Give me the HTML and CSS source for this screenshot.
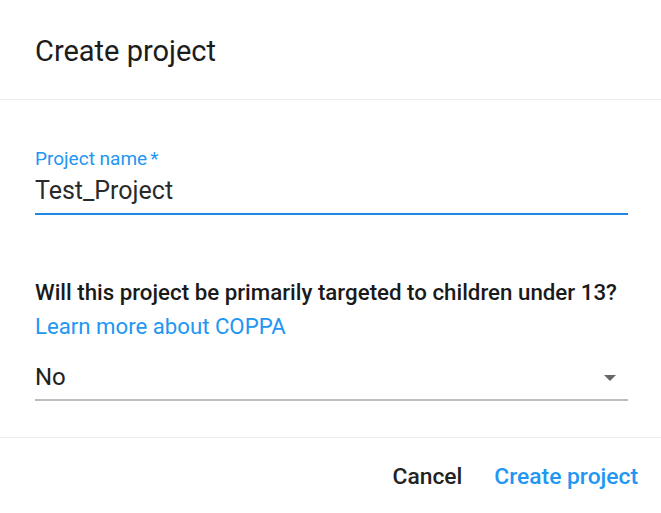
FILE: index.html
```html
<!DOCTYPE html>
<html>
<head>
<meta charset="utf-8">
<link rel="stylesheet" href="styles.css">
</head>
<body>
<div class="dialog">
  <div class="header">
    <h1 class="title">Create project</h1>
  </div>
  <div class="content">
    <div class="field focused">
      <label class="label">Project name<span class="req">*</span></label>
      <div class="value">Test_Project</div>
    </div>
    <p class="question">Will this project be primarily targeted to children under 13?</p>
    <a class="link" href="#">Learn more about COPPA</a>
    <div class="select">
      <span class="value">No</span>
      <svg class="arrow" width="12" height="6" viewBox="0 0 12 6"><path d="M0 0h12L6 6z" fill="#666"/></svg>
    </div>
  </div>
  <div class="footer">
    <button class="btn cancel">Cancel</button>
    <button class="btn primary">Create project</button>
  </div>
</div>
</body>
</html>
```

FILE: styles.css
```css
* { box-sizing: border-box; }
html, body { margin: 0; padding: 0; background: #fff; }
body { font-family: Roboto, "Noto Sans", sans-serif; color: #212121; width: 661px; height: 513px; overflow: hidden; }
.dialog { display: flex; flex-direction: column; }
.header { height: 100px; border-bottom: 1px solid #ececec; padding: 34px 35px 0; }
.title { margin: 0; font-size: 29px; line-height: 34px; font-weight: 400; color: #1c1c1c; }
.content { padding: 48px 33px 0 35px; height: 338px; border-bottom: 1px solid #ececec; display: flex; flex-direction: column; align-items: flex-start; }
.field { align-self: stretch; border-bottom: 2px solid #1e88e5; padding-bottom: 7px; }
.label { display: block; font-size: 19px; line-height: 22px; color: #2196f3; }
.req { margin-left: 3px; }
.field .value { font-size: 25px; line-height: 30px; margin-top: 6px; color: #2a2a2a; }
.question { margin: 63px 0 0; font-size: 22.3px; font-weight: 500; line-height: 28px; color: #1a1a1a; }
.link { margin-top: 6px; font-size: 22.2px; line-height: 28px; color: #2196f3; text-decoration: none; }
.select { align-self: stretch; margin-top: 22px; display: flex; align-items: center; justify-content: space-between; border-bottom: 2px solid #bdbdbd; padding: 0 12px 7px 0; }
.select .value { font-size: 24px; line-height: 30px; color: #222; }
.arrow { display: block; margin-top: 2px; }
.footer { display: flex; justify-content: flex-end; align-items: flex-start; gap: 32px; padding: 26px 23px 0 0; height: 75px; }
.btn { border: 0; background: none; padding: 0; font-family: inherit; font-size: 22.8px; line-height: 26px; font-weight: 500; cursor: pointer; }
.cancel { color: #222; }
.primary { color: #2196f3; }
```
